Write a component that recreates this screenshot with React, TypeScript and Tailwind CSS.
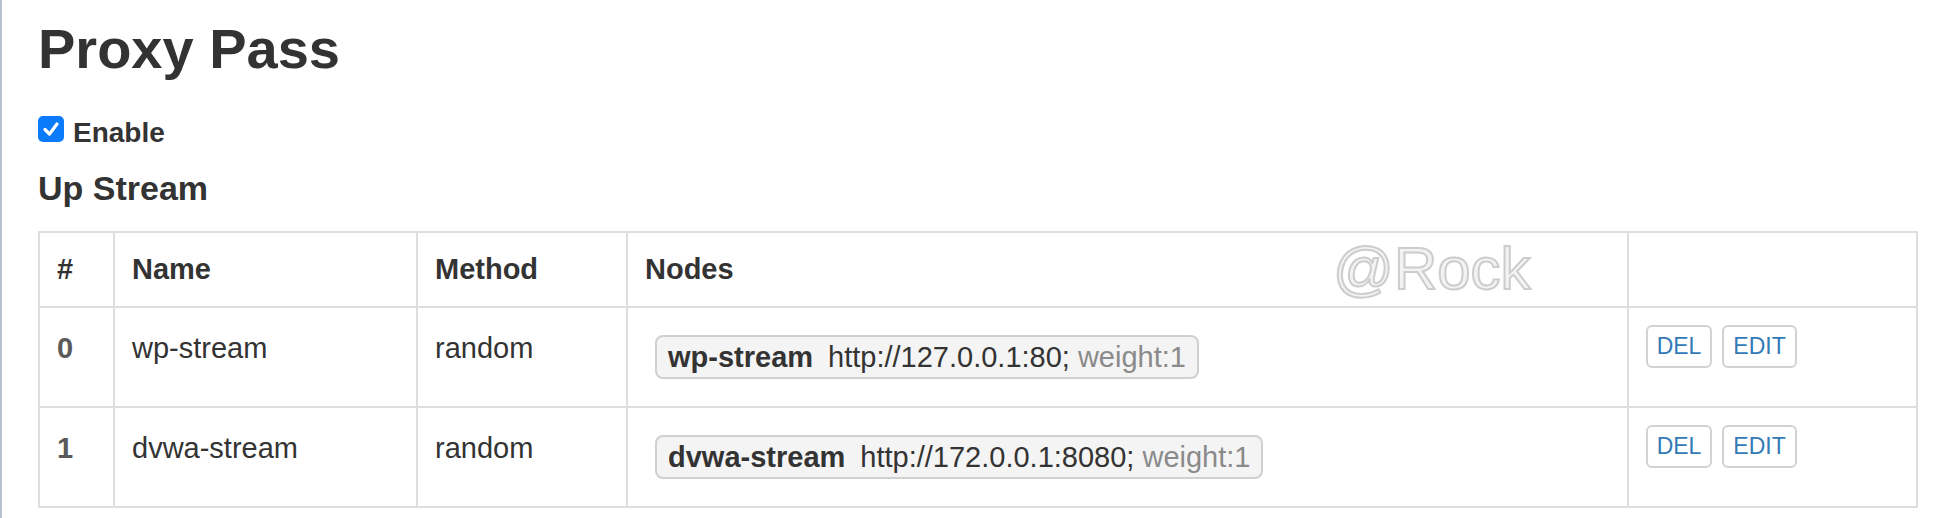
import React from "react";

const upstreams = [
  { id: 0, name: "wp-stream", method: "random", url: "http://127.0.0.1:80;", weight: 1 },
  { id: 1, name: "dvwa-stream", method: "random", url: "http://172.0.0.1:8080;", weight: 1 },
];

const NodeTag = ({ name, url, weight }: { name: string; url: string; weight: number }) => (
  <div className="mt-[7px] ml-[10px] inline-flex h-[44px] items-center rounded-[8px] border-2 border-[#d0d0d0] bg-[#f4f4f4] pl-[11px] pr-[11px] leading-[32px]">
    <span className="font-bold text-[#333]">{name}</span>
    <span className="ml-[15px] text-[#333]">{url}</span>
    <span className="ml-[8px] text-[#8a8a8a]">weight:{weight}</span>
  </div>
);

const ActionButton = ({ label, width }: { label: string; width: string }) => (
  <button
    className={`${width} h-[43px] rounded-[6px] border-2 border-[#d2d2d2] bg-white text-[23px] leading-none text-[#337ab7]`}
  >
    {label}
  </button>
);

export default function App() {
  return (
    <div className="min-h-screen border-l-2 border-[#b7c2cf] bg-white pl-[36px] pr-[24px] pt-[19px] font-['Liberation_Sans',Arial,sans-serif] text-[#333]">
      <h1 className="text-[56px] font-bold leading-[60px]">Proxy Pass</h1>

      <div className="mt-[38px] flex items-start">
        <div className="mt-[-1px] flex h-[26px] w-[26px] items-center justify-center rounded-[5px] bg-[#0b7bfb]">
          <svg width="20" height="20" viewBox="0 0 20 20" fill="none">
            <polyline
              points="4,10.5 8.5,15 16,5"
              stroke="white"
              strokeWidth="3.2"
              strokeLinecap="round"
              strokeLinejoin="round"
            />
          </svg>
        </div>
        <span className="ml-[9px] text-[28px] font-bold leading-[32px]">Enable</span>
      </div>

      <h4 className="mt-[20px] text-[34px] font-bold leading-[38px]">Up Stream</h4>

      <table className="mt-[24px] w-full border-collapse border-2 border-[#dedede] text-left text-[29px]">
        <thead>
          <tr>
            <th className="w-[75px] border-2 border-[#dedede] px-[17px] pt-[16px] pb-[17px] font-bold leading-[40px]">#</th>
            <th className="w-[303px] border-2 border-[#dedede] px-[17px] pt-[16px] pb-[17px] font-bold leading-[40px]">Name</th>
            <th className="w-[210px] border-2 border-[#dedede] px-[17px] pt-[16px] pb-[17px] font-bold leading-[40px]">Method</th>
            <th className="relative border-2 border-[#dedede] px-[17px] pt-[16px] pb-[17px] font-bold leading-[40px]">
              Nodes
              <span className="absolute left-[705px] top-[6px] text-[60px] font-normal leading-[60px] text-[#f3f3f3] [-webkit-text-stroke:2px_#cdcdcd]">
                @Rock
              </span>
            </th>
            <th className="w-[289px] border-2 border-[#dedede] px-[17px] pt-[16px] pb-[17px]"></th>
          </tr>
        </thead>
        <tbody>
          {upstreams.map((u) => (
            <tr key={u.id}>
              <td className="h-[100px] border-2 border-[#dedede] px-[17px] pt-[20px] align-top font-bold leading-[40px] text-[#5a5a5a]">
                {u.id}
              </td>
              <td className="border-2 border-[#dedede] px-[17px] pt-[20px] align-top leading-[40px]">{u.name}</td>
              <td className="border-2 border-[#dedede] px-[17px] pt-[20px] align-top leading-[40px]">{u.method}</td>
              <td className="border-2 border-[#dedede] px-[17px] pt-[20px] align-top">
                <NodeTag name={u.name} url={u.url} weight={u.weight} />
              </td>
              <td className="border-2 border-[#dedede] px-[17px] pt-[17px] align-top">
                <div className="flex gap-[10px]">
                  <ActionButton label="DEL" width="w-[66px]" />
                  <ActionButton label="EDIT" width="w-[75px]" />
                </div>
              </td>
            </tr>
          ))}
        </tbody>
      </table>
    </div>
  );
}
